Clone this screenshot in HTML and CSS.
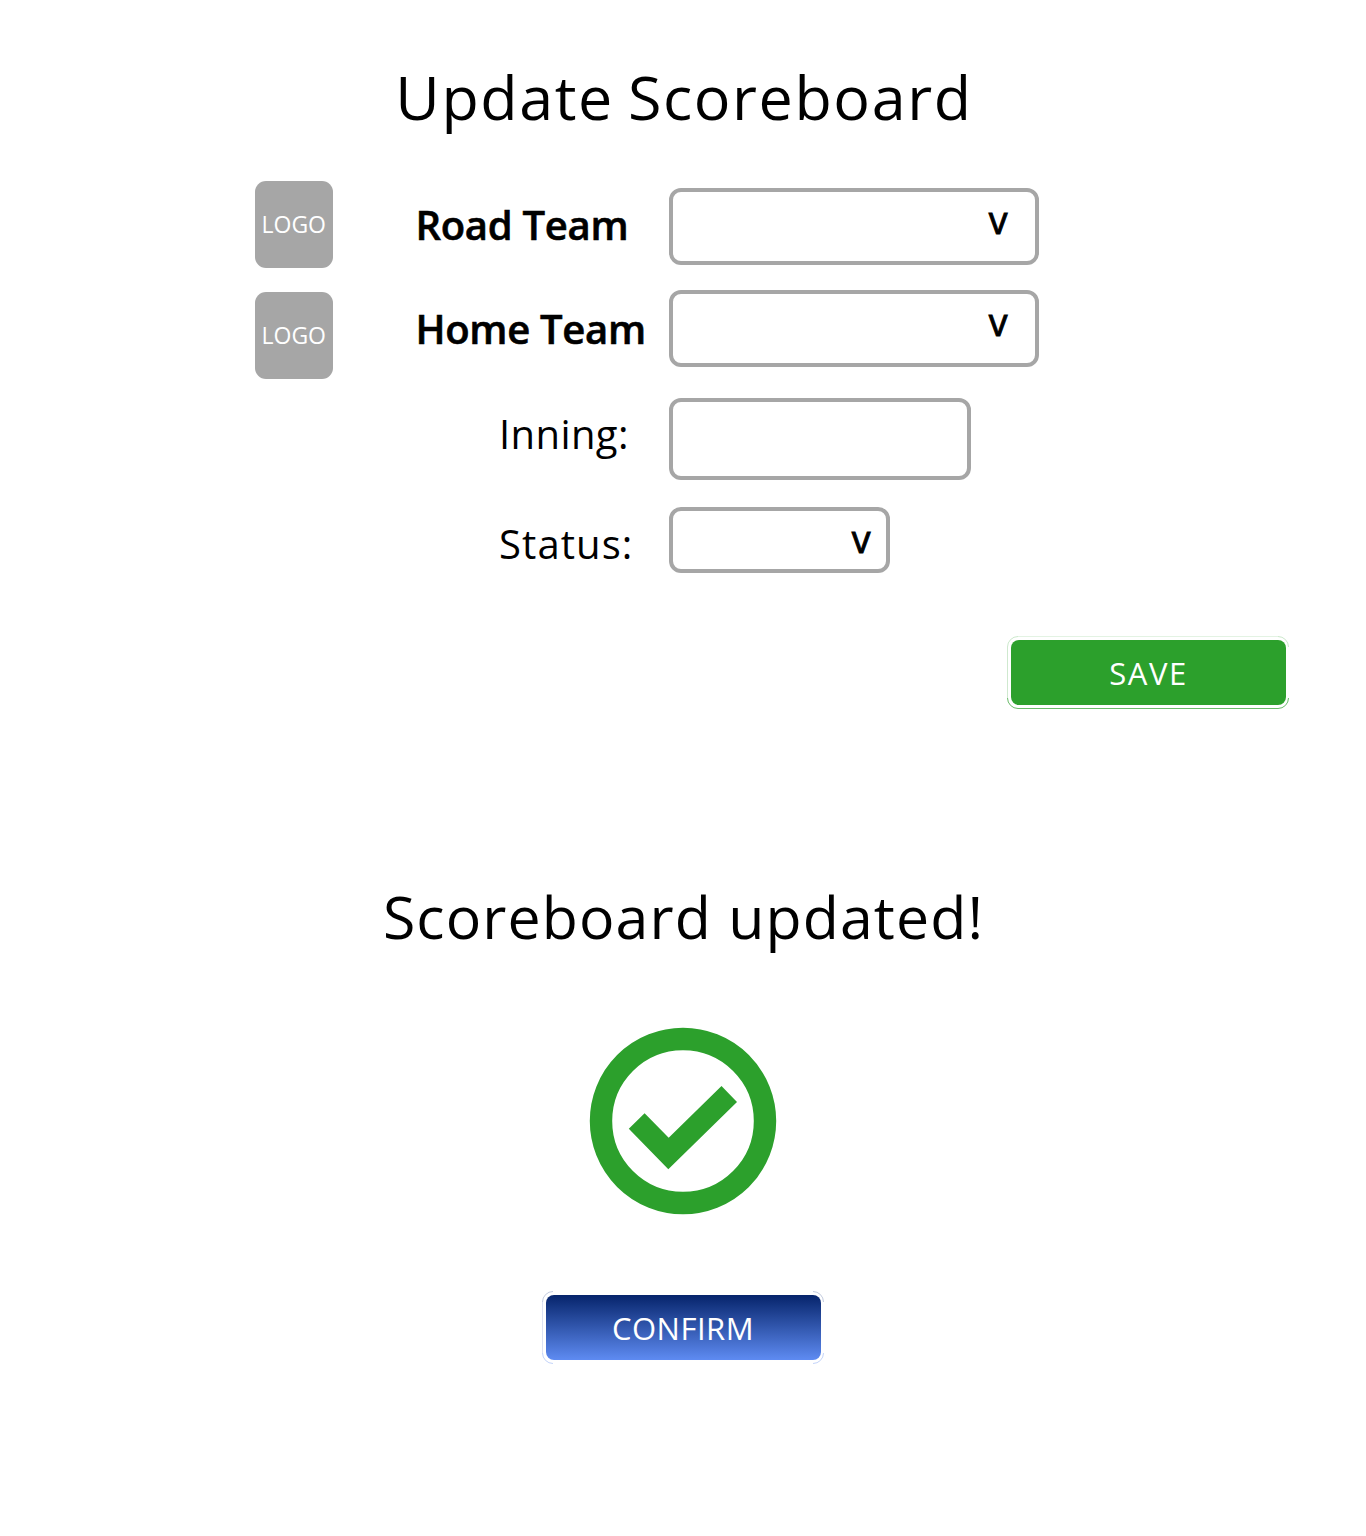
FILE: index.html
```html
<!DOCTYPE html>
<html lang="en">
<head>
<meta charset="utf-8">
<title>Update Scoreboard</title>
<link rel="stylesheet" href="styles.css">
</head>
<body>
<main class="page">
  <h1 class="title">Update Scoreboard</h1>
  <form class="form">
    <div class="logos">
      <div class="logo">LOGO</div>
      <div class="logo">LOGO</div>
    </div>
    <div class="labels">
      <div class="label team road">Road Team</div>
      <div class="label team home">Home Team</div>
      <div class="label inning">Inning:</div>
      <div class="label status">Status:</div>
    </div>
    <div class="fields">
      <div class="field select">v</div>
      <div class="field select">v</div>
      <div class="field input"></div>
      <div class="field select small">v</div>
    </div>
  </form>
  <button class="button save" type="button">SAVE
    <svg class="ring" viewBox="0 0 283 74" fill="none" aria-hidden="true">
      <path d="M11 .5H271" stroke="#e3f3e3"/>
      <path d="M.5 62V11" stroke="#cfe9cf"/>
      <path d="M.5 11A10.5 10.5 0 0 1 11 .5M271 .5A10.5 10.5 0 0 1 281.5 11" stroke="#b5deb5" stroke-width=".7"/>
      <path d="M.5 62A10.5 10.5 0 0 0 11 72.5H271A10.5 10.5 0 0 0 281.5 62" stroke="#6abb6a"/>
    </svg>
  </button>
  <h2 class="message">Scoreboard updated!</h2>
  <svg class="check" viewBox="0 0 188 188" aria-hidden="true">
    <circle cx="94" cy="94" r="82" fill="none" stroke="#2ca02c" stroke-width="22.4"/>
    <path d="M39.8 101.7 L55.6 86.3 L79.7 110.8 L132.5 59 L148 75 L79.3 142.3 Z" fill="#2ca02c"/>
  </svg>
  <button class="button confirm" type="button">CONFIRM
    <svg class="ring" viewBox="0 0 283 74" fill="none" aria-hidden="true">
      <path d="M.5 62V11" stroke="#dde2f3"/>
      <path d="M.5 11A10.5 10.5 0 0 1 11 .5M271 .5A10.5 10.5 0 0 1 281.5 11" stroke="#a9b4d0" stroke-width=".7"/>
      <path d="M.5 62A10.5 10.5 0 0 0 11 72.5M271 72.5A10.5 10.5 0 0 0 281.5 62" stroke="#a9c0f7" stroke-width=".7"/>
    </svg>
  </button>
</main>
</body>
</html>
```
FILE: styles.css
```css
* { box-sizing: border-box; }
body { margin: 0; background: #fff; color: #000; font-family: "Open Sans", "Noto Sans", sans-serif; }
.page { display: flex; flex-direction: column; align-items: center; width: 1366px; height: 1536px; padding-top: 57px; }
.title, .message { margin: 0; font-weight: 400; white-space: nowrap; line-height: 80px; }
.title { padding-left: 2px; font-size: 61px; letter-spacing: 1.6px; word-spacing: -3.5px; }
.form { display: flex; align-self: flex-start; height: 392px; margin: 44px 0 0 254.5px; }
.logos { display: flex; flex-direction: column; gap: 24.4px; width: 161.5px; }
.logo { width: 78.5px; height: 87px; border-radius: 11px; background: #a6a6a6; color: #fff; font-size: 23px; line-height: 86px; text-align: center; }
.labels { width: 253px; padding-top: 16px; }
.label { height: 56px; font-size: 40px; line-height: 56px; white-space: nowrap; }
.team { margin-left: -.5px; font-weight: 600; letter-spacing: -.3px; -webkit-text-stroke: .6px #000; }
.road { margin-bottom: 48px; }
.home { margin-bottom: 49px; }
.inning { margin-bottom: 54px; letter-spacing: .4px; }
.status { letter-spacing: 1.1px; }
.inning, .status { padding-left: 83px; }
.fields { padding-top: 7px; }
.field { border: 4px solid #a6a6a6; border-radius: 12px; width: 370px; height: 77px; margin-bottom: 25px; }
.select { display: flex; justify-content: flex-end; padding-right: 27.5px; font-size: 37.5px; font-weight: 400; line-height: 56px; -webkit-text-stroke: .9px #000; }
.input { width: 302px; height: 82px; margin: 31px 0 27px; }
.small { width: 221px; height: 66px; padding-right: 15.5px; }
.button { position: relative; border: 0; border-radius: 8px; width: 275px; height: 65px; padding: 2px 0 0; color: #fff; font: 400 31px/63px "Open Sans", "Noto Sans", sans-serif; }
.ring { position: absolute; top: -4px; left: -4px; width: 283px; height: 74px; }
.save { align-self: flex-end; margin: 67px 80px 0 0; background: #2ca02c; letter-spacing: 1.6px; }
.message { padding-left: 1px; margin-top: 171px; font-size: 59px; letter-spacing: 1.1px; }
.check { width: 188px; height: 188px; margin-top: 71px; }
.confirm { margin-top: 80px; background: linear-gradient(#06246b, #5e8bf2); letter-spacing: .5px; }
```
